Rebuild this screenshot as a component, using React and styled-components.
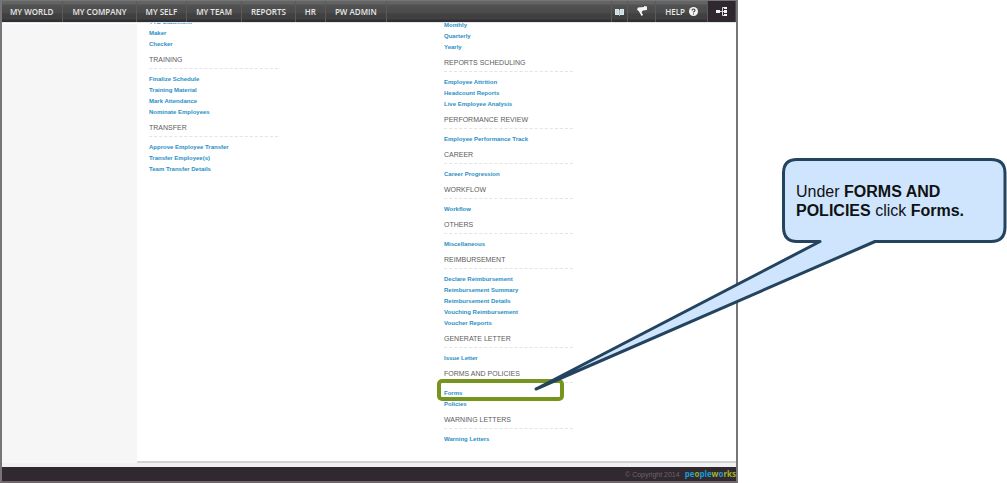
import styled, { createGlobalStyle } from "styled-components";

const GlobalStyle = createGlobalStyle`
  * {
    box-sizing: border-box;
  }
  body {
    margin: 0;
    background: #ffffff;
    font-family: "Liberation Sans", Arial, sans-serif;
  }
`;

const Page = styled.div`
  position: relative;
  display: flex;
  padding-right: 269px;
  min-height: 100vh;
`;

const Window = styled.div`
  flex: 1;
  min-width: 0;
  height: 100vh;
  display: flex;
  flex-direction: column;
  border: 2px solid #77757a;
  border-top: 1px solid #74747c;
  border-bottom-color: #6f676b;
`;

const TopBar = styled.header`
  flex: none;
  height: 21px;
  display: flex;
  justify-content: space-between;
  background: linear-gradient(#656763 0, #626262 3px, #525252 4px, #4a4a4a 12px, #404040 13px, #404040 18px, #332e33 19px);
`;

const Menu = styled.nav`
  display: flex;
`;

const MenuLink = styled.a`
  display: flex;
  align-items: center;
  gap: 4px;
  padding: 0 9px;
  border-right: 1px solid #5a5a58;
  color: #e6e6e6;
  font: 600 8px/20px "Open Sans", "Noto Sans", sans-serif;
  text-decoration: none;
  white-space: nowrap;
  &:first-child {
    padding-left: 8px;
  }
`;

const IconButton = styled.button`
  display: flex;
  align-items: center;
  justify-content: center;
  width: ${(props) => props.$width}px;
  padding: 0;
  border: 0;
  border-right: 1px solid ${(props) => (props.$active ? "#4a464a" : "#5a5a58")};
  background: ${(props) => (props.$active ? "#2f282f" : "transparent")};
  color: #f4f4f4;
  &:first-child {
    border-left: 1px solid #5a5a58;
  }
`;

const Body = styled.div`
  flex: 1;
  min-height: 0;
  display: flex;
  border-top: 1px solid #dfe9e9;
`;

const Sidebar = styled.aside`
  flex: none;
  width: 135px;
  background: #f6f6f6;
  border-top: 1px solid #ffffff;
`;

const Content = styled.main`
  flex: 1;
  display: flex;
  gap: 166px;
  padding-left: 12px;
  overflow: hidden;
  border-bottom: 2px solid #d3d1d1;
`;

const Column = styled.div`
  width: 129px;
  margin-top: ${(props) => props.$scroll}px;
`;

const Heading = styled.h2`
  margin: 6px 0 4px;
  height: 14px;
  border-bottom: 1px dashed #e4e4e4;
  color: #5c5c5c;
  font-size: 7px;
  font-weight: 400;
  line-height: 10px;
  white-space: nowrap;
`;

const List = styled.ul`
  margin: 0;
  padding: 0;
  list-style: none;
`;

const Item = styled.li`
  position: relative;
  height: 11px;
  line-height: 13px;
  font-size: 6px;
  font-weight: 700;
  white-space: nowrap;
`;

const ItemLink = styled.a`
  color: #2a8fc6;
  text-decoration: none;
`;

const Highlight = styled.span`
  position: absolute;
  top: -8px;
  left: -7px;
  width: 127px;
  height: 22px;
  border: 4px solid #76951f;
  border-radius: 5px;
  pointer-events: none;
`;

const Footer = styled.footer`
  flex: none;
  display: flex;
  align-items: center;
  justify-content: flex-end;
  gap: 5px;
  height: 18px;
  border-top: 4px solid #f1f1f1;
  background: #30292f;
  color: #6d666b;
  font-size: 7px;
`;

const Logo = styled.span`
  display: flex;
  font: 700 8px/12px "Open Sans", sans-serif;
`;

const Part = styled.span`
  color: ${(props) => props.$color};
`;

const Callout = styled.div`
  position: absolute;
  top: 156px;
  right: 0;
  width: 474px;
  height: 238px;
  padding: 26px 10px 0 263px;
  pointer-events: none;
`;

const CalloutShape = styled.svg`
  position: absolute;
  inset: 0;
`;

const CalloutText = styled.p`
  position: relative;
  margin: 0;
  color: #111111;
  font-size: 16px;
  line-height: 19px;
`;

const menu = ["MY WORLD", "MY COMPANY", "MY SELF", "MY TEAM", "REPORTS", "HR", "PW ADMIN"];

const leftSections = [
  { links: ["YTD Statement", "Maker", "Checker"] },
  {
    title: "TRAINING",
    links: ["Finalize Schedule", "Training Material", "Mark Attendance", "Nominate Employees"],
  },
  {
    title: "TRANSFER",
    links: ["Approve Employee Transfer", "Transfer Employee(s)", "Team Transfer Details"],
  },
];

const rightSections = [
  { links: ["Monthly", "Quarterly", "Yearly"] },
  {
    title: "REPORTS SCHEDULING",
    links: ["Employee Attrition", "Headcount Reports", "Live Employee Analysis"],
  },
  { title: "PERFORMANCE REVIEW", links: ["Employee Performance Track"] },
  { title: "CAREER", links: ["Career Progression"] },
  { title: "WORKFLOW", links: ["Workflow"] },
  { title: "OTHERS", links: ["Miscellaneous"] },
  {
    title: "REIMBURSEMENT",
    links: [
      "Declare Reimbursement",
      "Reimbursement Summary",
      "Reimbursement Details",
      "Vouching Reimbursement",
      "Voucher Reports",
    ],
  },
  { title: "GENERATE LETTER", links: ["Issue Letter"] },
  { title: "FORMS AND POLICIES", links: ["Forms", "Policies"] },
  { title: "WARNING LETTERS", links: ["Warning Letters"] },
];

function Sections({ sections, scroll }) {
  return (
    <Column $scroll={scroll}>
      {sections.map(({ title, links }) => (
        <section key={links[0]}>
          {title && <Heading>{title}</Heading>}
          <List>
            {links.map((link) => (
              <Item key={link}>
                <ItemLink href="#">{link}</ItemLink>
                {link === "Forms" && <Highlight />}
              </Item>
            ))}
          </List>
        </section>
      ))}
    </Column>
  );
}

function App() {
  return (
    <Page>
      <GlobalStyle />
      <Window>
        <TopBar>
          <Menu>
            {menu.map((item) => (
              <MenuLink href="#" key={item}>
                {item}
              </MenuLink>
            ))}
          </Menu>
          <Menu>
            <IconButton $width={17} aria-label="Guide">
              <svg width="9" height="8" viewBox="0 0 9 8">
                <path d="M0 1h4v6H0zM5 1h4v6H5z" fill="#dbe9ee" />
                <path d="M4 2h1v6H4z" fill="#9fb6c0" />
                <path d="M1 3h2M1 5h2M6 3h2M6 5h2" stroke="#9fb6c0" strokeWidth="0.6" />
              </svg>
            </IconButton>
            <IconButton $width={28} aria-label="Announcements">
              <svg width="12" height="14" viewBox="0 0 12 14">
                <path d="M2 2.500L8 2V1l3 .5V5L7 5.500 5.500 7 7 10 5.500 11 3 6.500 1 4.500z" fill="#f4f4f4" />
              </svg>
            </IconButton>
            <MenuLink href="#">
              HELP
              <svg width="9" height="9" viewBox="0 0 9 9">
                <circle cx="4.5" cy="4.5" r="4.5" fill="#f4f4f4" />
                <path d="M3 3.500q0-1.500 1.500-1.500T6 3.500Q6 4.300 4.500 5v.6M4.500 6.500v1" fill="none" stroke="#3c3c3c" strokeWidth="1.100" />
              </svg>
            </MenuLink>
            <IconButton $width={28} $active aria-label="Organisation chart">
              <svg width="12" height="11" viewBox="0 0 12 11">
                <path d="M0 4h4v3H0zM8 1h3v2H8zM8 4h3v3H8zM8 8h3v2H8z" fill="#f4f4f4" />
                <path d="M4 5.500h4M8 1.500H6.500v8H8" fill="none" stroke="#d8d8d8" />
              </svg>
            </IconButton>
          </Menu>
        </TopBar>
        <Body>
          <Sidebar />
          <Content>
            <Sections sections={leftSections} scroll={-7} />
            <Sections sections={rightSections} scroll={-4} />
          </Content>
        </Body>
        <Footer>
          © Copyright 2014
          <Logo>
            <Part $color="#1d9ad6">pe</Part>
            <Part $color="#8fae2b">o</Part>
            <Part $color="#1d9ad6">ple</Part>
            <Part $color="#a3b52e">w</Part>
            <Part $color="#1d9ad6">o</Part>
            <Part $color="#a3b52e">rks</Part>
          </Logo>
        </Footer>
      </Window>
      <Callout>
        <CalloutShape width="474" height="238" viewBox="0 0 474 238">
          <path
            d="M264 3.500H458Q472 3.500 472 17V71Q472 85.500 458 85.500H342L3 233L287 85.500H264Q250.500 85.500 250.500 71V17Q250.500 3.500 264 3.500Z"
            fill="#cfe5fd"
            stroke="#24435e"
            strokeWidth="3"
            strokeLinejoin="round"
          />
        </CalloutShape>
        <CalloutText>
          Under <b>FORMS AND POLICIES</b> click <b>Forms.</b>
        </CalloutText>
      </Callout>
    </Page>
  );
}

export default App;
